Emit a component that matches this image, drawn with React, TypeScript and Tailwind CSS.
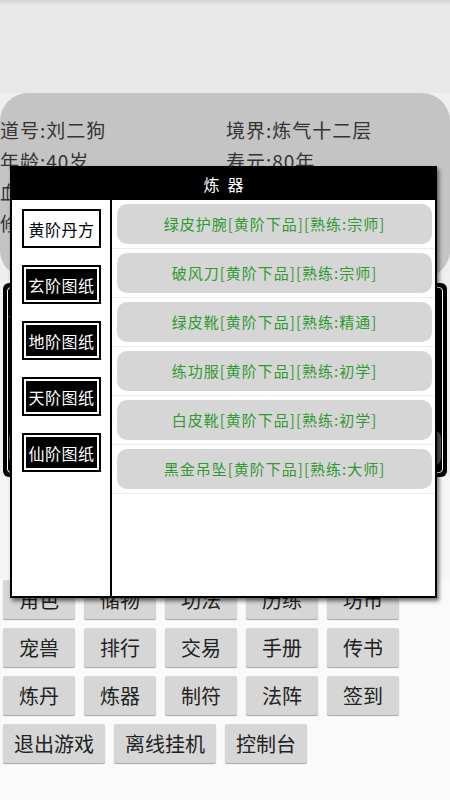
const font = { fontFamily: '"Noto Sans CJK SC", "Noto Sans", sans-serif' }

const recipes = [
  '绿皮护腕[黄阶下品][熟练:宗师]',
  '破风刀[黄阶下品][熟练:宗师]',
  '绿皮靴[黄阶下品][熟练:精通]',
  '练功服[黄阶下品][熟练:初学]',
  '白皮靴[黄阶下品][熟练:初学]',
  '黑金吊坠[黄阶下品][熟练:大师]',
]

const tiers = ['黄阶丹方', '玄阶图纸', '地阶图纸', '天阶图纸', '仙阶图纸']

const menuRows = [
  ['角色', '储物', '功法', '历练', '坊市'],
  ['宠兽', '排行', '交易', '手册', '传书'],
  ['炼丹', '炼器', '制符', '法阵', '签到'],
]

function MenuButton({ label, wide }: { label: string; wide?: boolean }) {
  return (
    <div
      className={
        'flex h-[39px] items-center justify-center rounded-[2px] bg-[#d6d6d6] text-[20px] text-[#222] shadow-[0_1px_1px_rgba(0,0,0,0.35)] ' +
        (wide ? 'px-[11px]' : 'w-[72px]')
      }
    >
      {label}
    </div>
  )
}

export default function App() {
  return (
    <div className="relative h-[800px] w-[450px] overflow-hidden bg-[#fafafa]" style={font}>
      {/* background screen */}
      <div className="bg-[#e9e9e9]">
        <div className="h-[5px] bg-gradient-to-b from-[#d2d2d2] to-[#e9e9e9]" />
        <div className="h-[88px]" />
        <div className="bg-[#efefef]">
          <div className="h-[185px] rounded-[28px] bg-[#c4c4c4] pt-[21px] text-[19px] leading-[31px] tracking-[1px] text-[#333]">
            <div className="grid grid-cols-2">
              <span>道号:刘二狗</span>
              <span className="pl-[1px]">境界:炼气十二层</span>
              <span>年龄:40岁</span>
              <span className="pl-[1px]">寿元:80年</span>
              <span>血量:1200/1200</span>
              <span className="pl-[1px]">灵力:800/800</span>
              <span>修为:12000/15000</span>
              <span className="pl-[1px]">灵石:3500</span>
            </div>
          </div>
        </div>
      </div>
      <div className="bg-[#efefef] px-[3px] pt-[5px]">
        <div className="h-[194px] rounded-[6px] bg-black p-[4px]">
          <div className="flex h-full flex-col rounded-[4px] border-[1.5px] border-white px-[1px] pt-[20px] text-[15px] leading-[20px] text-white">
            <span>请选择要炼制的物品</span>
            <span>需消耗材料与灵石</span>
            <div className="mt-auto mb-[6px] h-[36px] rounded-[8px] bg-[#555]" />
          </div>
        </div>
      </div>
      <div className="h-[103px] bg-[#f6f6f6]" />
      <div className="flex flex-col gap-[9px] px-[3px]">
        {menuRows.map((row) => (
          <div key={row[0]} className="flex gap-[9px]">
            {row.map((b) => (
              <MenuButton key={b} label={b} />
            ))}
          </div>
        ))}
        <div className="flex gap-[9px]">
          <MenuButton label="退出游戏" wide />
          <MenuButton label="离线挂机" wide />
          <MenuButton label="控制台" wide />
        </div>
      </div>

      {/* crafting dialog */}
      <div className="absolute left-[10px] top-[166px] flex h-[432px] w-[427px] flex-col border-2 border-black bg-white shadow-[2px_3px_4px_rgba(0,0,0,0.55)]">
        <div className="flex h-[32px] items-center justify-center bg-black text-[16px] tracking-[8px] text-white">
          <span className="pl-[8px]">炼器</span>
        </div>
        <div className="flex flex-1">
          <div className="flex w-[100px] flex-col gap-[17px] border-r-2 border-black pl-[10px] pt-[9px]">
            {tiers.map((t, i) =>
              i === 0 ? (
                <div
                  key={t}
                  className="flex h-[39px] w-[79px] items-center justify-center border-2 border-black bg-white text-[16px] tracking-[0.5px] text-black"
                >
                  {t}
                </div>
              ) : (
                <div key={t} className="h-[39px] w-[79px] border-2 border-black bg-black">
                  <div className="flex h-full items-center justify-center border-2 border-white text-[16px] tracking-[0.5px] text-white">
                    {t}
                  </div>
                </div>
              ),
            )}
          </div>
          <div className="flex flex-1 flex-col">
            {recipes.map((r) => (
              <div key={r} className="border-b border-[#ececec] py-[4px] pl-[5px] pr-[3px]">
                <div className="flex h-[40px] items-center justify-center rounded-[10px] bg-[#d6d6d6] text-[15px] tracking-[1px] text-[#2f9a2f]">
                  {r}
                </div>
              </div>
            ))}
          </div>
        </div>
      </div>
    </div>
  )
}
